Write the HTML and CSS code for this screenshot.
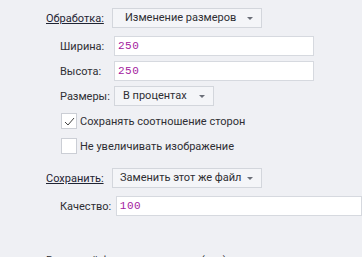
FILE: index.html
```html
<!DOCTYPE html>
<html lang="ru">
<head>
  <meta charset="UTF-8">
  <title>Изменение размеров</title>
  <link rel="stylesheet" href="styles.css">
</head>
<body>
  <div class="section">
    <div class="head">
      <span class="head-label">Обработка:</span>
      <div class="select wide">Изменение размеров<span class="arrow"></span></div>
    </div>
    <div class="sub">
      <div class="row">
        <span class="label">Ширина:</span>
        <div class="input">250</div>
      </div>
      <div class="row">
        <span class="label">Высота:</span>
        <div class="input">250</div>
      </div>
      <div class="row">
        <span class="label">Размеры:</span>
        <div class="select narrow">В процентах<span class="arrow"></span></div>
      </div>
      <div class="row check-row">
        <span class="check checked">
          <svg width="11" height="9" viewBox="0 0 11 9"><path d="M1 5 L4 8 L10 1" fill="none" stroke="#444" stroke-width="1"/></svg>
        </span>
        <span>Сохранять соотношение сторон</span>
      </div>
      <div class="row check-row">
        <span class="check"></span>
        <span>Не увеличивать изображение</span>
      </div>
    </div>
  </div>

  <div class="section second">
    <div class="head">
      <span class="head-label">Сохранить:</span>
      <div class="select wide">Заменить этот же файл<span class="arrow"></span></div>
    </div>
    <div class="sub">
      <div class="row">
        <span class="label label-q">Качество:</span>
        <div class="input full">100</div>
      </div>
    </div>
  </div>

  <div class="tail">
    <span class="tail-left">Выходной формат</span>
    <span class="tail-right">(тип)</span>
  </div>
</body>
</html>
```

FILE: styles.css
```css
body {
  margin: 0;
  padding: 8px 0 0 46px;
  background: #eff0f4;
  font-family: Roboto, "Liberation Sans", sans-serif;
  font-size: 11px;
  color: #2e2e33;
  overflow: hidden;
  height: 257px;
  box-sizing: border-box;
}
.head {
  display: flex;
  align-items: center;
  height: 20px;
}
.head-label {
  width: 66px;
  text-decoration: underline;
  color: #1f2433;
}
.select {
  position: relative;
  box-sizing: border-box;
  height: 20px;
  line-height: 18px;
  border: 1px solid #d3d6dc;
  background: #f4f5f8;
  padding-left: 12px;
}
.wide {
  width: 150px;
}
.narrow {
  width: 100px;
  padding-left: 8px;
}
.second .select {
  padding-left: 7px;
}
.arrow {
  position: absolute;
  right: 8px;
  top: 8px;
  border-left: 3px solid transparent;
  border-right: 3px solid transparent;
  border-top: 3px solid #6b6f78;
}
.sub {
  padding: 8px 0 0 14px;
  display: flex;
  flex-direction: column;
  gap: 5px;
}
.row {
  display: flex;
  align-items: center;
  height: 20px;
}
.label {
  width: 54px;
}
.label-q {
  width: 59px;
}
.input {
  box-sizing: border-box;
  width: 200px;
  height: 20px;
  line-height: 18px;
  border: 1px solid #d6d9df;
  background: #fff;
  padding-left: 3px;
  font-family: "Liberation Mono", monospace;
  font-size: 11px;
  color: #a3209e;
  letter-spacing: 0.5px;
}
.full {
  width: 260px;
}
.check-row {
  gap: 3px;
  padding-left: 1px;
}
.check {
  box-sizing: border-box;
  width: 16px;
  height: 16px;
  border: 1px solid #cbced5;
  background: #fff;
  display: flex;
  align-items: center;
  justify-content: center;
}
.second {
  margin-top: 12px;
}
.tail {
  display: flex;
  margin-top: 38px;
}
.tail-left {
  width: 155px;
}
```
